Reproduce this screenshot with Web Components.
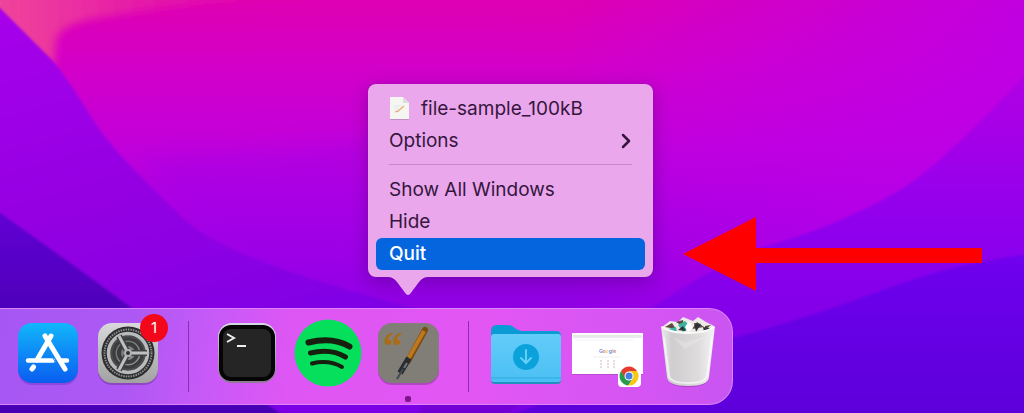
<!DOCTYPE html>
<html lang="en">
<head>
<meta charset="utf-8">
<title>Dock</title>
<style>
    body {
        margin: 0;
        font-family: Inter, "Liberation Sans", sans-serif;
    }
</style>
</head>
<body>
<desktop-screen>
    <callout-arrow slot="overlay"></callout-arrow>
    <app-dock>
        <dock-item label="App Store">
            <svg viewBox="0 0 80 95" aria-hidden="true">
                <defs>
                    <linearGradient id="store" x2="0" y2="1"><stop stop-color="#12b7fb"/><stop offset="1" stop-color="#0a5df0"/></linearGradient>
                </defs>
                <rect x="10" y="15" width="60" height="61" rx="14" fill="#5b2ca8" opacity=".35"/>
                <rect x="10" y="14" width="60" height="60" rx="14" fill="url(#store)"/>
                <g stroke="#fff" stroke-width="5" stroke-linecap="round">
                    <path d="M43 27 29 51M37 27l20 33M25.500 58l-1.500 2"/>
                    <path d="M20 51.500h25M53 51.500h6" stroke-width="4.500"/>
                </g>
                <path d="m39.500 40 8.500 14" stroke="#138cf5" stroke-width="1"/>
            </svg>
        </dock-item>
        <dock-item label="System Preferences" badge="1">
            <svg viewBox="0 0 80 95" aria-hidden="true">
                <defs>
                    <linearGradient id="metal" x2="0" y2="1"><stop stop-color="#d9d9db"/><stop offset="1" stop-color="#a3a2a2"/></linearGradient>
                    <linearGradient id="steel" x2="1" y2="1"><stop stop-color="#666"/><stop offset="1" stop-color="#999"/></linearGradient>
                </defs>
                <rect x="10" y="15" width="60" height="61" rx="14" fill="#5b2c78" opacity=".4"/>
                <rect x="10" y="14" width="60" height="60" rx="14" fill="url(#metal)"/>
                <circle cx="40" cy="44" r="26.500" fill="#2c2d2f"/>
                <circle cx="40" cy="44" r="23.500" fill="none" stroke="#8b8d8e" stroke-width="2" stroke-dasharray="1.500 1"/>
                <circle cx="40" cy="44" r="19.500" fill="#4a4b4d" stroke="#b9babb" stroke-width="3.500"/>
                <circle cx="40" cy="44" r="14" fill="url(#steel)" stroke="#3b3c3e" stroke-width="3"/>
                <circle cx="40" cy="44" r="9" fill="none" stroke="#3b3c3e" stroke-width="4"/>
                <path d="M40 44 31 27M40 44h19M40 44 31 61" stroke="#404143" stroke-width="6"/>
                <path d="M40 44 31 27M40 44h19M40 44 31 61" stroke="#bebfc0" stroke-width="3"/>
                <circle cx="40" cy="44" r="4" fill="#b1b2b3"/>
                <circle cx="40" cy="44" r="2" fill="#333"/>
            </svg>
        </dock-item>
        <dock-divider></dock-divider>
        <dock-item label="Terminal">
            <svg viewBox="0 0 80 95" aria-hidden="true">
                <defs>
                    <linearGradient id="rim" x2="0" y2="1"><stop stop-color="#d7d9e5"/><stop offset="1" stop-color="#8e7b91"/></linearGradient>
                </defs>
                <rect x="10" y="14" width="58" height="60" rx="14" fill="url(#rim)"/>
                <rect x="11" y="16" width="56" height="56" rx="12" fill="#050505"/>
                <rect x="15" y="20" width="48" height="48" rx="8" fill="#252526"/>
                <path d="m19 25 7 4-7 4M29 37h9" fill="none" stroke="#eee" stroke-width="2"/>
            </svg>
        </dock-item>
        <dock-item label="Spotify">
            <svg viewBox="0 0 80 95" aria-hidden="true">
                <circle cx="40" cy="44" r="33.500" fill="#05df5b"/>
                <g fill="none" stroke="#17200f" stroke-linecap="round">
                    <path d="M20.500 33.500q24-6 41 4" stroke-width="6"/>
                    <path d="M22.500 44q20-5 35 4" stroke-width="5"/>
                    <path d="M24 54.500q17-4 30 3.500" stroke-width="4"/>
                </g>
            </svg>
        </dock-item>
        <dock-item label="TextEdit" running>
            <svg viewBox="0 0 80 95" aria-hidden="true">
                <rect x="10" y="15" width="61" height="61" rx="14" fill="#673175" opacity=".4"/>
                <rect x="10" y="14" width="61" height="60" rx="14" fill="#817d77"/>
                <text x="15" y="51" font-family="Liberation Serif, serif" font-size="40" font-weight="700" fill="#aa6c17">“</text>
                <path d="M55 25 35 60" stroke="#5f5b58" stroke-width="5" opacity=".5"/>
                <path d="M57 21 40 52" stroke="#7b4b14" stroke-width="6" stroke-linecap="round"/>
                <path d="M56 22 39 52" stroke="#bd781e" stroke-width="4"/>
                <path d="m41 49-9 15" stroke="#292d30" stroke-width="6"/>
                <path d="M35 60 29 70" stroke="#414a50" stroke-width="2"/>
                <path d="m39 54-3 5" stroke="#737878" stroke-width="2"/>
            </svg>
            <dock-menu slot="menu">
                <menu-row>
                    <svg slot="icon" width="22" height="24" viewBox="0 0 22 24" aria-hidden="true">
                        <path d="M1 1h14l5 6v16H1z" fill="#a276a6" opacity=".5"/>
                        <path d="M1 0h13l6 6v16H1z" fill="#f5f5f1"/>
                        <path d="M14 0v6h6z" fill="#dcdcd8"/>
                        <path d="M5 9h7M5 12h5" stroke="#d9ecdf"/>
                        <path d="m8 15 7-6" stroke="#e9b57b" stroke-width="1.500"/>
                        <path d="m6 15 3-1" stroke="#e39a9a"/>
                    </svg>
                    file-sample_100kB
                </menu-row>
                <menu-row submenu>Options</menu-row>
                <menu-rule></menu-rule>
                <menu-row>Show All Windows</menu-row>
                <menu-row>Hide</menu-row>
                <menu-row selected>Quit</menu-row>
            </dock-menu>
        </dock-item>
        <dock-divider></dock-divider>
        <dock-item label="Downloads">
            <svg viewBox="0 0 80 95" aria-hidden="true">
                <defs>
                    <linearGradient id="folder" x2="0" y2="1"><stop stop-color="#63ccf9"/><stop offset="1" stop-color="#4bbff3"/></linearGradient>
                </defs>
                <path d="M3 22q0-6 6-6h11q4 0 7 3t7 3h34q5 0 5 5v10H3z" fill="#0a9bd5"/>
                <path d="M3 30q0-4 4-4h62q4 0 4 4v41q0 4-4 4H7q-4 0-4-4z" fill="#218fbe"/>
                <path d="M3 28q0-3 3-3h64q3 0 3 3v42q0 3-3 3H6q-3 0-3-3z" fill="url(#folder)"/>
                <path d="M3 69h70" stroke="#2eaae0"/>
                <circle cx="38" cy="48" r="13" fill="#0ba2dc"/>
                <path d="M38 41v13m-5-5 5 5 5-5" fill="none" stroke="#65cff7" stroke-width="2" stroke-linecap="round"/>
            </svg>
        </dock-item>
        <dock-item label="Google Chrome window">
            <svg viewBox="0 0 80 95" aria-hidden="true">
                <rect x="4" y="25" width="71" height="41" fill="#8d3aa0" opacity=".4"/>
                <rect x="4" y="24" width="71" height="41" fill="#fff"/>
                <path d="M5 26h69v3H5z" fill="#e7e9ed"/>
                <path d="M7 31h58" stroke="#eff0f2"/>
                <text x="31" y="44" font-family="Inter, sans-serif" font-size="5" font-weight="600"><tspan fill="#5588e8">G</tspan><tspan fill="#e77770">o</tspan><tspan fill="#edc567">o</tspan><tspan fill="#5588e8">g</tspan><tspan fill="#78b985">l</tspan><tspan fill="#e77770">e</tspan></text>
                <path d="M25 48h27" stroke="#eee"/>
                <path d="M33 51v8m7-8v8m6-8v8" stroke="#ccb8b8" stroke-dasharray="2 1"/>
                <rect x="50" y="57" width="23" height="21" rx="4" fill="#fff"/>
                <g transform="translate(61 67)">
                    <path d="M-8-5A9.500 9.500 0 0 1 8-5L4 0-5 2z" fill="#e43c2f"/>
                    <path d="M8-5A9.500 9.500 0 0 1-1 9.500L4 2 0-5z" fill="#fbc715"/>
                    <path d="M-8-5A9.500 9.500 0 0 0-1 9.500L4 2-4 2z" fill="#269d4c"/>
                    <circle r="4.500" fill="#fff"/><circle r="3.500" fill="#4280e8"/>
                </g>
            </svg>
        </dock-item>
        <dock-item label="Trash">
            <svg viewBox="0 0 80 95" aria-hidden="true">
                <defs>
                    <linearGradient id="bin"><stop stop-color="#ededed"/><stop offset=".2" stop-color="#cfcdcf"/><stop offset=".7" stop-color="#dfdcdd"/><stop offset="1" stop-color="#f4f4f4"/></linearGradient>
                </defs>
                <path d="M21 71q2 7 19 7t20-7z" fill="#763187" opacity=".4"/>
                <path d="m14 18 8-6 8 1 5-5 10 4 5-4 8 5 8 4-4 10-42 1z" fill="#ece9e7"/>
                <path d="m17 18 7-4 4 6zM28 13l7-2 1 7zM44 20l5-7 7 5zM57 17l6-1-6 5z" fill="#5f473f"/>
                <path d="m30 16 7-4 6 6-8 5zM20 20l8-2 1 5z" fill="#3cb3a2"/>
                <path d="m46 14 7 1-5 8zM55 18l7 1-6 4zM30 21l5-4 3 5z" fill="#2e3336"/>
                <path d="m41 12 4 7-5 4-3-5z" fill="#fff"/>
                <path d="M13 17q7 6 27 6t27-6l-6 51q-1 9-21 9t-21-9z" fill="url(#bin)"/>
                <path d="M14 18q8 6 26 6t26-6" fill="none" stroke="#fafafa" stroke-width="2"/>
                <path d="m16 28 5 39q2 7 19 7t19-7l5-39" fill="none" stroke="#fff" stroke-width="2" opacity=".6"/>
                <path d="m24 28 13 5 20-5-20 12z" fill="#fff" opacity=".2"/>
            </svg>
        </dock-item>
    </app-dock>
</desktop-screen>

<script>
    class DesktopScreen extends HTMLElement {
        connectedCallback() {
            this.attachShadow({ mode: 'open' });
            this.shadowRoot.innerHTML = `
                <style>
                    :host {
                        display: flex;
                        flex-direction: column;
                        justify-content: flex-end;
                        align-items: flex-start;
                        position: relative;
                        box-sizing: border-box;
                        min-height: 100vh;
                        padding-bottom: 8px;
                        overflow: hidden;
                        background: #9000e0;
                    }

                    .wallpaper {
                        position: absolute;
                        inset: 0;
                        width: 100%;
                        height: 100%;
                    }
                </style>
                <svg class="wallpaper" viewBox="0 0 1024 413" preserveAspectRatio="none" aria-hidden="true">
                    <defs>
                        <linearGradient id="sky" x2="0" y2="1">
                            <stop stop-color="#de00b2"/>
                            <stop offset=".16" stop-color="#d300c8"/>
                            <stop offset=".33" stop-color="#c400d8"/>
                            <stop offset=".5" stop-color="#ad00e2"/>
                            <stop offset=".7" stop-color="#9300e5"/>
                            <stop offset="1" stop-color="#7200d5"/>
                        </linearGradient>
                        <linearGradient id="east"><stop offset=".55" stop-color="#b900ef" stop-opacity="0"/><stop offset="1" stop-color="#bc00e8" stop-opacity=".85"/></linearGradient>
                        <linearGradient id="west" x2=".3" y2="1"><stop stop-color="#a800ec"/><stop offset=".5" stop-color="#9400e2"/><stop offset="1" stop-color="#7c00e6"/></linearGradient>
                        <linearGradient id="ridge" x2="0" y2="1"><stop stop-color="#b300e4"/><stop offset=".5" stop-color="#8c00ee"/><stop offset="1" stop-color="#7600e0"/></linearGradient>
                        <linearGradient id="deep" x2="0" y2="1"><stop stop-color="#7000ee"/><stop offset="1" stop-color="#5c00da"/></linearGradient>
                        <linearGradient id="night" x2="0" y2="1"><stop stop-color="#6200d5"/><stop offset=".5" stop-color="#4d00b8"/><stop offset="1" stop-color="#4500b5"/></linearGradient>
                        <linearGradient id="dawn"><stop stop-color="#f04a98"/><stop offset=".3" stop-color="#ea2ca2"/><stop offset="1" stop-color="#e000b0" stop-opacity="0"/></linearGradient>
                        <filter id="soft" x="-20%" y="-20%" width="140%" height="140%"><feGaussianBlur stdDeviation="12"/></filter>
                        <filter id="haze" x="-20%" y="-50%" width="140%" height="200%"><feGaussianBlur stdDeviation="4"/></filter>
                        <filter id="edge"><feGaussianBlur stdDeviation="1"/></filter>
                    </defs>
                    <path d="M0 0h1024v413H0z" fill="url(#sky)"/>
                    <path d="M0 0h1024v413H0z" fill="url(#east)"/>
                    <path d="M-20-20H330V0Q200 0 110 16 60 22 56 40L54 66 20 50-20 10z" fill="url(#dawn)" filter="url(#haze)"/>
                    <path d="M140 158q130-5 230-20v180H260z" fill="#9800ee" opacity=".3" filter="url(#soft)"/>
                    <g filter="url(#edge)">
                        <path d="M-5 3 50 58C70 80 82 104 100 130S155 190 180 215 250 265 420 310V420H-5z" fill="url(#west)"/>
                        <path d="M1030 70C960 145 925 175 900 190S830 228 770 245 600 340 500 420h530z" fill="url(#ridge)"/>
                        <path d="M1030 254C950 265 910 280 880 291S800 320 740 336 600 380 500 420h530z" fill="url(#deep)"/>
                        <path d="M-5 209Q60 255 132 308T290 420H-5z" fill="url(#night)"/>
                    </g>
                </svg>
                <slot name="overlay"></slot>
                <slot></slot>
            `;
        }
    }

    class CalloutArrow extends HTMLElement {
        connectedCallback() {
            this.attachShadow({ mode: 'open' });
            this.shadowRoot.innerHTML = `
                <style>
                    :host {
                        display: block;
                        position: absolute;
                        left: 683px;
                        bottom: 122px;
                        width: 300px;
                        height: 74px;
                    }
                </style>
                <svg width="300" height="74" viewBox="0 0 300 74" aria-hidden="true">
                    <path d="M0 37 73 0v31h226v15H73v28z" fill="#f00"/>
                </svg>
            `;
        }
    }

    class AppDock extends HTMLElement {
        connectedCallback() {
            this.attachShadow({ mode: 'open' });
            this.shadowRoot.innerHTML = `
                <style>
                    :host {
                        display: flex;
                        position: relative;
                        padding: 0 4px 0 8px;
                        border: 1px solid #dc83f8;
                        border-left: 0;
                        border-radius: 0 24px 24px 0;
                        background: linear-gradient(100deg, #a657f3 0%, #ad58f4 18%, #c75af8 29%, #de56f3 40%, #e256f4 65%, #d455f3 88%, #c855f1 100%);
                    }
                </style>
                <slot></slot>
            `;
        }
    }

    class DockDivider extends HTMLElement {
        connectedCallback() {
            this.attachShadow({ mode: 'open' });
            this.shadowRoot.innerHTML = `
                <style>
                    :host {
                        display: flex;
                        justify-content: center;
                        width: 40px;
                        padding: 12px 0;
                    }

                    span {
                        width: 1px;
                        background: #8a2fb4;
                    }
                </style>
                <span></span>
            `;
        }
    }

    class DockItem extends HTMLElement {
        connectedCallback() {
            const badge = this.getAttribute('badge');
            this.attachShadow({ mode: 'open' });
            this.shadowRoot.innerHTML = `
                <style>
                    :host {
                        display: block;
                        position: relative;
                        width: 80px;
                    }

                    button {
                        display: block;
                        width: 100%;
                        padding: 0;
                        border: 0;
                        background: none;
                        font: inherit;
                    }

                    ::slotted(svg) {
                        display: block;
                        width: 80px;
                        height: 95px;
                    }

                    .badge {
                        position: absolute;
                        top: 5px;
                        right: 0;
                        width: 28px;
                        border-radius: 50%;
                        background: #f3071b;
                        color: #fff;
                        font-size: 15px;
                        line-height: 28px;
                        text-align: center;
                    }

                    .dot {
                        position: absolute;
                        bottom: 2px;
                        left: 37px;
                        width: 6px;
                        height: 6px;
                        border-radius: 2px;
                        background: #7c158f;
                    }
                </style>
                <button type="button" aria-label="${this.getAttribute('label')}">
                    <slot></slot>
                    ${badge ? `<span class="badge">${badge}</span>` : ''}
                    ${this.hasAttribute('running') ? '<span class="dot"></span>' : ''}
                </button>
                <slot name="menu"></slot>
            `;
        }
    }

    class DockMenu extends HTMLElement {
        connectedCallback() {
            this.attachShadow({ mode: 'open' });
            this.shadowRoot.innerHTML = `
                <style>
                    :host {
                        display: block;
                        position: absolute;
                        left: 0;
                        bottom: calc(100% + 32px);
                        box-sizing: border-box;
                        width: 285px;
                        padding: 9px 8px 7px;
                        border-radius: 8px;
                        background: #eaa7eb;
                        box-shadow: 0 0 1px #7b168f, 0 5px 18px rgba(60, 0, 100, 0.4);
                    }

                    .pointer {
                        position: absolute;
                        top: 100%;
                        left: 20px;
                        display: block;
                    }
                </style>
                <slot></slot>
                <svg class="pointer" width="40" height="18" viewBox="0 0 40 18" aria-hidden="true">
                    <path d="M0 0q5 0 9 5l9 12q2 2 4 0l9-12q4-5 9-5z" fill="#eaa7eb"/>
                </svg>
            `;
        }
    }

    class MenuRow extends HTMLElement {
        connectedCallback() {
            this.attachShadow({ mode: 'open' });
            this.shadowRoot.innerHTML = `
                <style>
                    :host {
                        display: block;
                    }

                    button {
                        display: flex;
                        align-items: center;
                        width: 100%;
                        height: 32px;
                        padding: 0 13px;
                        border: 0;
                        border-radius: 6px;
                        background: none;
                        color: #35163e;
                        font: inherit;
                        font-size: 19px;
                        line-height: 24px;
                        white-space: nowrap;
                    }

                    :host([selected]) button {
                        background: #0465df;
                        color: #fff;
                        font-weight: 500;
                    }

                    ::slotted(svg) {
                        margin-right: 10px;
                    }

                    .chevron {
                        margin-left: auto;
                    }
                </style>
                <button type="button">
                    <slot name="icon"></slot>
                    <span><slot></slot></span>
                    ${this.hasAttribute('submenu') ? `
                        <svg class="chevron" width="12" height="16" viewBox="0 0 12 16" aria-hidden="true">
                            <path d="m3 2 6 6-6 6" fill="none" stroke="#35163e" stroke-width="2.500" stroke-linecap="round" stroke-linejoin="round"/>
                        </svg>` : ''}
                </button>
            `;
        }
    }

    class MenuRule extends HTMLElement {
        connectedCallback() {
            this.attachShadow({ mode: 'open' });
            this.shadowRoot.innerHTML = `
                <style>
                    :host {
                        display: block;
                        padding: 7px 13px 9px;
                    }

                    hr {
                        margin: 0;
                        border: 0;
                        border-top: 1px solid #c785cc;
                    }
                </style>
                <hr>
            `;
        }
    }

    customElements.define('desktop-screen', DesktopScreen);
    customElements.define('callout-arrow', CalloutArrow);
    customElements.define('app-dock', AppDock);
    customElements.define('dock-divider', DockDivider);
    customElements.define('dock-item', DockItem);
    customElements.define('dock-menu', DockMenu);
    customElements.define('menu-row', MenuRow);
    customElements.define('menu-rule', MenuRule);
</script>
</body>
</html>
